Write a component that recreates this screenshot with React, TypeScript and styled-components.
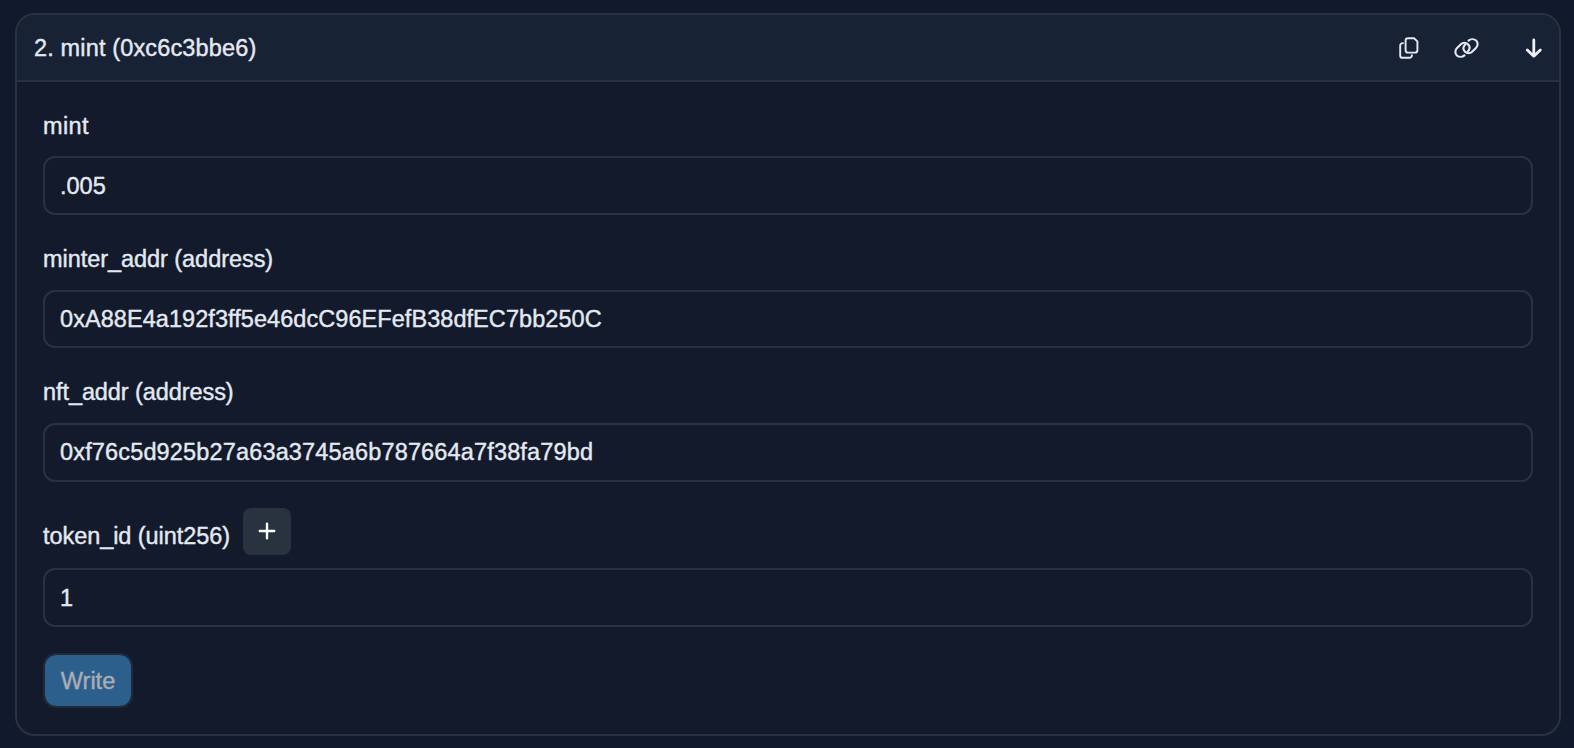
import React from "react";
import styled, { createGlobalStyle } from "styled-components";

const GlobalStyle = createGlobalStyle`
  *, *::before, *::after { box-sizing: border-box; }
  body {
    margin: 0;
    background: #11192c;
    color: #e4e9f1;
    font-family: "Liberation Sans", Arial, sans-serif;
    font-size: 23.5px;
    line-height: 28px;
    -webkit-text-stroke: 0.4px currentColor;
  }
`;

const Page = styled.main`
  height: 748px;
  padding: 13px 13px 12px 15px;
`;

const Card = styled.section`
  height: 723px;
  border: 2px solid #29333f;
  border-radius: 20px;
  background: #121a2c;
  overflow: hidden;
`;

const Header = styled.header`
  display: flex;
  align-items: center;
  height: 67px;
  padding: 0 16px 0 17px;
  border-bottom: 2px solid #29333f;
  background: #182235;
`;

const Text = styled.span<{ $spacing?: number }>`
  white-space: nowrap;
  letter-spacing: ${(p) => p.$spacing ?? 0}px;
`;

const Actions = styled.div`
  display: flex;
  align-items: center;
  margin-left: auto;
  svg { display: block; }
`;

const LinkSlot = styled.span`
  margin: 0 46px 0 35px;
`;

const Form = styled.div`
  padding: 30px 26px 0;
`;

const Field = styled.div<{ $gap: number }>`
  margin-bottom: ${(p) => p.$gap}px;
`;

const Label = styled.div<{ $gap?: number }>`
  display: flex;
  height: 28px;
  margin-bottom: ${(p) => p.$gap ?? 17}px;
`;

const AddLabel = styled(Label)`
  height: 47px;
  gap: 13px;
  ${Text} { padding-top: 14px; }
`;

const AddButton = styled.button`
  display: grid;
  place-items: center;
  width: 48px;
  height: 47px;
  padding: 0 1px 2px 0;
  border: 0;
  border-radius: 8px;
  background: #29333f;
  color: #fff;
`;

const ValueBox = styled.div<{ $height: number; $lift?: number }>`
  display: flex;
  align-items: center;
  height: ${(p) => p.$height}px;
  padding: 0 15px ${(p) => p.$lift ?? 0}px;
  border: 2px solid #29333f;
  border-radius: 12px;
`;

const WriteButton = styled.button`
  display: block;
  width: 90px;
  height: 55px;
  padding: 0;
  border: 2px solid #202a39;
  border-radius: 13px;
  background: #2c5f8b;
  background-clip: padding-box;
  color: #a9adb6;
  font: inherit;
  -webkit-text-stroke: inherit;
`;

const CopyIcon = () => (
  <svg width="20" height="22" viewBox="0 0 20 22" fill="none" stroke="#e4e9f1" strokeWidth="1.9" strokeLinejoin="round" strokeLinecap="round">
    <path d="M9 1.2h6L18.4 4.4v8.8a2.4 2.4 0 0 1-2.4 2.4H9a2.4 2.4 0 0 1-2.4-2.4V3.6A2.4 2.4 0 0 1 9 1.2Z" />
    <path d="M4 6.1H3.6a2.4 2.4 0 0 0-2.4 2.4v9.9a2.4 2.4 0 0 0 2.4 2.4h6.9a2.4 2.4 0 0 0 2.4-2.4v-.2" />
  </svg>
);

const LinkIcon = () => (
  <svg width="25" height="20" viewBox="0 0 640 512" fill="none" stroke="#e4e9f1" strokeWidth="54" strokeLinecap="round">
    <path d="M372 68C424 22 511 16 567 66C618 116 618 197 567 247L464 350C414 400 333 400 283 350C239 306 232 238 268 189C274 181 282 174 291 169" />
    <path d="M268 444C216 490 129 496 73 446C22 396 22 315 73 265L176 162C226 112 307 112 357 162C401 206 408 274 372 323C366 331 358 338 349 343" />
  </svg>
);

const ArrowIcon = () => (
  <svg width="18" height="20" viewBox="0 0 18 20" fill="none" stroke="#eef1f6" strokeWidth="2.8" strokeLinecap="round" strokeLinejoin="round">
    <path d="M8.8 2v16.2M2.3 11.9 8.8 18.2l6.5-6.3" />
  </svg>
);

const PlusIcon = () => (
  <svg width="18" height="18" viewBox="0 0 18 18" fill="none" stroke="currentColor" strokeWidth="2.4" strokeLinecap="round">
    <path d="M9 1.8v14.4M1.8 9h14.4" />
  </svg>
);

export default function App() {
  return (
    <Page>
      <GlobalStyle />
      <Card>
        <Header>
          <Text $spacing={0.15}>2. mint (0xc6c3bbe6)</Text>
          <Actions>
            <CopyIcon />
            <LinkSlot><LinkIcon /></LinkSlot>
            <ArrowIcon />
          </Actions>
        </Header>
        <Form>
          <Field $gap={30}>
            <Label $gap={16}><Text $spacing={0.4}>mint</Text></Label>
            <ValueBox $height={59}><Text>.005</Text></ValueBox>
          </Field>
          <Field $gap={30}>
            <Label><Text $spacing={-0.05}>minter_addr (address)</Text></Label>
            <ValueBox $height={58}><Text $spacing={0.06}>0xA88E4a192f3ff5e46dcC96EFefB38dfEC7bb250C</Text></ValueBox>
          </Field>
          <Field $gap={26}>
            <Label><Text $spacing={-0.08}>nft_addr (address)</Text></Label>
            <ValueBox $height={59} $lift={1}><Text $spacing={0.155}>0xf76c5d925b27a63a3745a6b787664a7f38fa79bd</Text></ValueBox>
          </Field>
          <Field $gap={26}>
            <AddLabel $gap={13}>
              <Text $spacing={-0.06}>token_id (uint256)</Text>
              <AddButton aria-label="Add zeroes"><PlusIcon /></AddButton>
            </AddLabel>
            <ValueBox $height={59}><Text>1</Text></ValueBox>
          </Field>
          <WriteButton disabled>Write</WriteButton>
        </Form>
      </Card>
    </Page>
  );
}
